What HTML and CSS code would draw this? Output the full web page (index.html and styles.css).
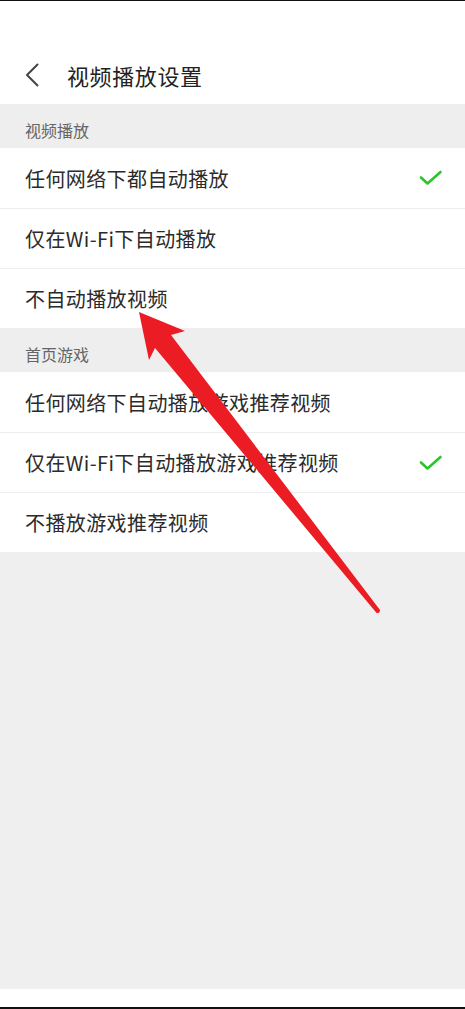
FILE: index.html
```html
<!DOCTYPE html>
<html lang="zh-CN">
<head>
<meta charset="utf-8">
<title>视频播放设置</title>
<link rel="stylesheet" href="styles.css">
</head>
<body>
<div class="screen">
  <header class="topbar">
    <div class="topbar-row">
      <svg class="back" viewBox="0 0 14 24" width="14" height="24" aria-hidden="true">
        <path d="M12.5 1.5 L2 12 L12.5 22.5" fill="none" stroke="#444" stroke-width="2" stroke-linecap="round" stroke-linejoin="round"/>
      </svg>
      <h1 class="title">视频播放设置</h1>
    </div>
  </header>

  <section class="group">
    <div class="group-title">视频播放</div>
    <ul class="list">
      <li class="item"><span>任何网络下都自动播放</span>
        <svg class="check" viewBox="0 0 24 16" width="24" height="16" aria-hidden="true"><path d="M2 7.5 L8.5 13.5 L21.5 2" fill="none" stroke="#2bc52b" stroke-width="2.6" stroke-linecap="round" stroke-linejoin="round"/></svg>
      </li>
      <li class="item"><span>仅在Wi-Fi下自动播放</span></li>
      <li class="item"><span>不自动播放视频</span></li>
    </ul>
  </section>

  <section class="group">
    <div class="group-title">首页游戏</div>
    <ul class="list">
      <li class="item"><span>任何网络下自动播放游戏推荐视频</span></li>
      <li class="item"><span>仅在Wi-Fi下自动播放游戏推荐视频</span>
        <svg class="check" viewBox="0 0 24 16" width="24" height="16" aria-hidden="true"><path d="M2 7.5 L8.5 13.5 L21.5 2" fill="none" stroke="#2bc52b" stroke-width="2.6" stroke-linecap="round" stroke-linejoin="round"/></svg>
      </li>
      <li class="item"><span>不播放游戏推荐视频</span></li>
    </ul>
  </section>

  <div class="filler"></div>
  <div class="navbar"></div>

  <svg class="arrow" viewBox="0 0 465 1009" width="465" height="1009" aria-hidden="true">
    <path d="M139 312 L185 331 L171 335 L380 610 A2.5 2.5 0 0 1 376.4 612.7 L155 348 L149 360 Z" fill="#ec1c24"/>
  </svg>
</div>
</body>
</html>
```

FILE: styles.css
```css
* { box-sizing: border-box; }

html, body {
  margin: 0;
  padding: 0;
}

body {
  font-family: "Noto Sans CJK SC", "Noto Sans", sans-serif;
  background: #000;
}

.screen {
  position: relative;
  width: 465px;
  height: 1009px;
  display: flex;
  flex-direction: column;
  background: #efefef;
  border-top: 1px solid #111;
  border-bottom: 2px solid #111;
  overflow: hidden;
}

.topbar {
  height: 103px;
  background: #fff;
  display: flex;
  align-items: flex-end;
  padding: 0 0 4px 25px;
  flex: none;
}

.topbar-row {
  height: 50px;
  display: flex;
  align-items: center;
}

.back {
  display: block;
  margin-right: 28px;
}

.title {
  margin: 0;
  font-size: 22px;
  font-weight: 400;
  color: #222;
  letter-spacing: 0.6px;
  line-height: 50px;
}

.group {
  flex: none;
}

.group-title {
  height: 44px;
  padding: 8px 0 0 25px;
  font-size: 16px;
  line-height: 36px;
  color: #666;
  background: #eeeeee;
}

.list {
  list-style: none;
  margin: 0;
  padding: 0;
  background: #fff;
}

.item {
  height: 60px;
  display: flex;
  align-items: center;
  justify-content: space-between;
  padding: 0 22px 0 25px;
  font-size: 20px;
  color: #2b2b2b;
  letter-spacing: 0.4px;
}

.item + .item {
  border-top: 1px solid #ededed;
}

.check {
  display: block;
}

.filler {
  flex: 1;
  background: #efefef;
}

.navbar {
  flex: none;
  height: 18px;
  background: #fff;
}

.arrow {
  position: absolute;
  left: 0;
  top: -1px;
  pointer-events: none;
}
```
